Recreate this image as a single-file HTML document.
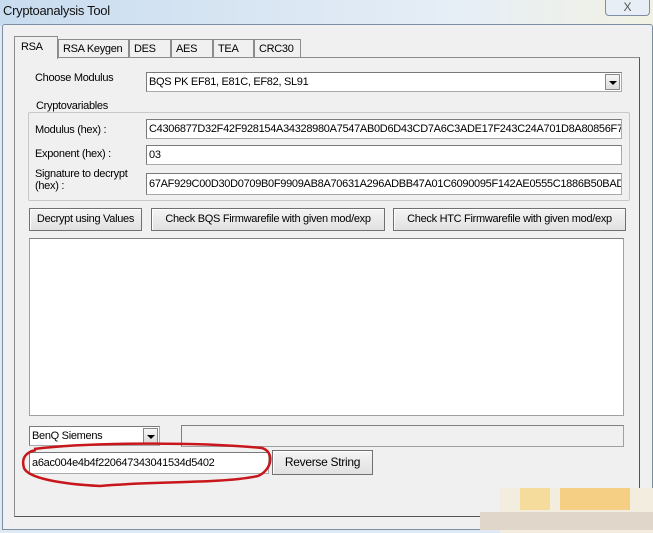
<!DOCTYPE html>
<html><head><style>
*{box-sizing:border-box;margin:0;padding:0}
body{width:653px;height:533px;overflow:hidden;background:#dfe9f4;font-family:"Liberation Sans",sans-serif;font-size:11px;color:#000;position:relative}
.a{position:absolute}
.t{letter-spacing:-0.3px;white-space:nowrap}
.in{background:#fff;border:1px solid #a9a9a9;border-top-color:#7a7a7a;border-left-color:#7a7a7a;padding:3px 2px;overflow:hidden;white-space:nowrap;letter-spacing:-0.3px}
.btn{background:linear-gradient(#f4f4f4,#e1e1e1);border:1px solid #707070;box-shadow:inset 1px 1px #fff;text-align:center;line-height:20px;letter-spacing:-0.3px;white-space:nowrap}
.tab{background:#f0f0f0;border:1px solid #8c8c8c;border-bottom:none;height:18px;top:39px;padding:3px 4px 0;letter-spacing:-0.3px}
.dd{position:absolute;right:1px;top:1px;width:15px;bottom:1px;background:linear-gradient(#f6f6f6,#dcdcdc);border:1px solid #888}
.dd:after{content:"";position:absolute;left:3px;top:6px;border-left:4px solid transparent;border-right:4px solid transparent;border-top:4px solid #000}
</style></head><body>
<div class="a" style="left:0;top:0;width:653px;height:26px;background:linear-gradient(90deg,#c8dcf0,#d9e6f3 40%,#e6eef6 70%,#f2f2e4)"></div>
<div class="a t" style="left:3px;top:3px;font-size:13px;color:#111">Cryptoanalysis Tool</div>
<div class="a" style="left:605px;top:0;width:45px;height:16px;border:1px solid #7f8ea5;border-top:none;border-radius:0 0 4px 4px;background:#e8eef5;text-align:center;font-size:12px;line-height:14px;color:#555">X</div>
<div class="a" style="left:2px;top:24px;width:651px;height:506px;background:#f0f0f0;border:1px solid #7d8ea3;border-radius:3px 3px 0 0"></div>
<!-- tab panel -->
<div class="a" style="left:14px;top:57px;width:626px;height:460px;border:1px solid #8c8c8c;border-right-color:#555;border-bottom-color:#555;background:#f0f0f0"></div>
<div class="a tab" style="left:58px;width:71px">RSA Keygen</div>
<div class="a tab" style="left:129px;width:42px">DES</div>
<div class="a tab" style="left:171px;width:42px">AES</div>
<div class="a tab" style="left:213px;width:41px">TEA</div>
<div class="a tab" style="left:254px;width:47px">CRC30</div>
<div class="a tab" style="left:14px;top:36px;width:44px;height:23px;padding-top:4px;padding-left:6px;background:#f0f0f0">RSA</div>
<div class="a t" style="left:35px;top:72px">Choose Modulus</div>
<div class="a in" style="left:146px;top:72px;width:476px;height:20px">BQS PK EF81, E81C, EF82, SL91<div class="dd"></div></div>
<div class="a" style="left:28px;top:112px;width:602px;height:89px;border:1px solid #c8c8c8;border-radius:2px"></div>
<div class="a t" style="left:34px;top:100px;background:#f0f0f0;padding:0 2px">Cryptovariables</div>
<div class="a t" style="left:35px;top:124px">Modulus (hex) :</div>
<div class="a in" style="left:146px;top:119px;width:476px;height:20px">C4306877D32F42F928154A34328980A7547AB0D6D43CD7A6C3ADE17F243C24A701D8A80856F7</div>
<div class="a t" style="left:35px;top:148px">Exponent (hex) :</div>
<div class="a in" style="left:146px;top:145px;width:476px;height:20px">03</div>
<div class="a t" style="left:35px;top:168px;line-height:12px">Signature to decrypt<br>(hex) :</div>
<div class="a in" style="left:146px;top:173px;width:476px;height:22px;padding-top:4px">67AF929C00D30D0709B0F9909AB8A70631A296ADBB47A01C6090095F142AE0555C1886B50BAD</div>
<div class="a btn" style="left:29px;top:208px;width:113px;height:23px">Decrypt using Values</div>
<div class="a btn" style="left:151px;top:208px;width:234px;height:23px">Check BQS Firmwarefile with given mod/exp</div>
<div class="a btn" style="left:393px;top:208px;width:233px;height:23px">Check HTC Firmwarefile with given mod/exp</div>
<div class="a" style="left:29px;top:238px;width:595px;height:178px;background:#fff;border:1px solid #a0a0a0;border-top-color:#808080"></div>
<div class="a in" style="left:29px;top:426px;width:131px;height:20px">BenQ Siemens<div class="dd"></div></div>
<div class="a" style="left:181px;top:425px;width:443px;height:22px;border:1px solid #a0a0a0;border-top-color:#808080;border-left-color:#808080"></div>
<div class="a in" style="left:29px;top:452px;width:240px;height:22px;padding-top:4px">a6ac004e4b4f220647343041534d5402</div>
<div class="a btn" style="left:272px;top:450px;width:101px;height:25px;line-height:22px;font-size:12px">Reverse String</div>
<svg class="a" style="left:0;top:0" width="653" height="533"><path d="M34 449 C90 442,200 442,262 448 C275 452,272 470,258 476 C220 484,150 481,100 486 C60 484,28 478,24 468 C21 458,26 452,36 450" fill="none" stroke="#c8171c" stroke-width="2.5"/>
<rect x="500" y="488" width="153" height="45" fill="#f3ede0"/><rect x="520" y="488" width="30" height="22" fill="#f6dc9c"/><rect x="560" y="488" width="70" height="22" fill="#f4cf84"/><rect x="480" y="512" width="173" height="18" fill="#e0d6ca"/></svg>
</body></html>
